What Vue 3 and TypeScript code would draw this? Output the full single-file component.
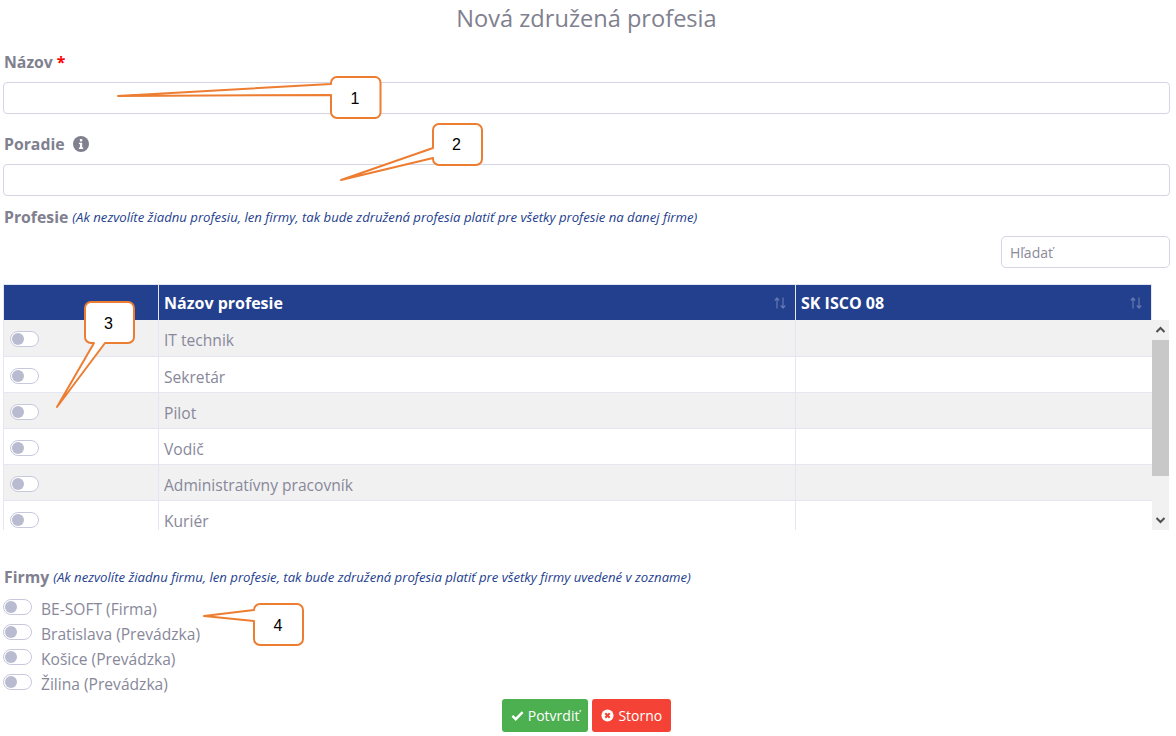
<template>
  <div class="page">
    <h1 class="title">Nová združená profesia</h1>

    <div class="field field--name">
      <label class="label">Názov <span class="req">*</span></label>
      <input class="input" type="text">
    </div>

    <div class="field field--order">
      <label class="label">
        Poradie
        <svg class="info" viewBox="0 0 16 16" aria-hidden="true">
          <circle cx="8" cy="8" r="8" fill="#80808f" />
          <rect x="6.9" y="3" width="2.4" height="2.4" rx="0.6" fill="#fff" />
          <path d="M5.9 6.7h3.3v4.9h1v1.3H5.9v-1.3h1V8H5.9z" fill="#fff" />
        </svg>
      </label>
      <input class="input" type="text">
    </div>

    <div class="section-head">
      <span class="label">Profesie</span>
      <em class="hint">(Ak nezvolíte žiadnu profesiu, len firmy, tak bude združená profesia platiť pre všetky profesie na danej firme)</em>
    </div>

    <div class="search-row">
      <input class="search" type="text" placeholder="Hľadať">
    </div>

    <div class="table">
      <div class="table__head">
        <div class="th th--toggle"></div>
        <div class="th th--name">
          <span>Názov profesie</span>
          <svg class="sort" viewBox="0 0 12 12" aria-hidden="true">
            <path d="M3 11.500V1M0.800 3.500L3 1l2.200 2.500M9 0.500V11M6.800 8.500L9 11l2.200-2.500" fill="none" stroke="currentColor" stroke-width="1.200" />
          </svg>
        </div>
        <div class="th th--code">
          <span>SK ISCO 08</span>
          <svg class="sort" viewBox="0 0 12 12" aria-hidden="true">
            <path d="M3 11.500V1M0.800 3.500L3 1l2.200 2.500M9 0.500V11M6.800 8.500L9 11l2.200-2.500" fill="none" stroke="currentColor" stroke-width="1.200" />
          </svg>
        </div>
      </div>
      <div class="table__wrap">
        <div class="table__body">
          <div v-for="(name, idx) in professions" :key="name" class="tr" :class="{ 'tr--odd': idx % 2 === 0 }">
            <div class="td td--toggle"><span class="switch"></span></div>
            <div class="td td--name">{{ name }}</div>
            <div class="td td--code"></div>
          </div>
        </div>
        <div class="scrollbar" aria-hidden="true">
          <svg class="scrollbar__arrow" viewBox="0 0 17 20">
            <path d="M4.500 12l4-4 4 4" fill="none" stroke="#505050" stroke-width="2" />
          </svg>
          <div class="scrollbar__track"><div class="scrollbar__thumb"></div></div>
          <svg class="scrollbar__arrow" viewBox="0 0 17 20">
            <path d="M4.500 8l4 4 4-4" fill="none" stroke="#505050" stroke-width="2" />
          </svg>
        </div>
      </div>
    </div>

    <div class="section-head section-head--firms">
      <span class="label">Firmy</span>
      <em class="hint">(Ak nezvolíte žiadnu firmu, len profesie, tak bude združená profesia platiť pre všetky firmy uvedené v zozname)</em>
    </div>

    <div class="firms">
      <div v-for="firm in firms" :key="firm" class="firm">
        <span class="switch"></span>
        <span class="firm__name">{{ firm }}</span>
      </div>
    </div>

    <div class="actions">
      <button type="button" class="btn btn--ok">
        <svg class="btn__icon" viewBox="0 0 14 14" aria-hidden="true">
          <path d="M1.500 7.500l3.600 3.500 7.400-7.600" fill="none" stroke="#fff" stroke-width="2.600" />
        </svg>
        Potvrdiť
      </button>
      <button type="button" class="btn btn--cancel">
        <svg class="btn__icon" viewBox="0 0 14 14" aria-hidden="true">
          <circle cx="7" cy="7" r="6.500" fill="#fff" />
          <path d="M4.600 4.600l4.800 4.800M9.400 4.600l-4.800 4.800" stroke="#f44336" stroke-width="2.200" />
        </svg>
        Storno
      </button>
    </div>

    <svg class="callouts" width="1176" height="736" aria-hidden="true">
      <g v-for="c in callouts" :key="c.text">
        <path :d="c.path" fill="#fff" stroke="#ed7d31" stroke-width="2" stroke-linejoin="round" />
        <text :x="c.tx" :y="c.ty" class="callouts__num" text-anchor="middle">{{ c.text }}</text>
      </g>
    </svg>
  </div>
</template>

<script setup lang="ts">
const professions = ['IT technik', 'Sekretár', 'Pilot', 'Vodič', 'Administratívny pracovník', 'Kuriér']
const firms = ['BE-SOFT (Firma)', 'Bratislava (Prevádzka)', 'Košice (Prevádzka)', 'Žilina (Prevádzka)']

// rounded box with a pointer tail leaving through one side
const callouts = [
  {
    text: '1', tx: 355, ty: 104,
    path: 'M337 77H375a5.500 5.500 0 0 1 5.500 5.500V112.500a5.500 5.500 0 0 1-5.500 5.500H337a6 6 0 0 1-6-6V95L118 96L331 84V83a6 6 0 0 1 6-6Z',
  },
  {
    text: '2', tx: 456.500, ty: 150,
    path: 'M439 124H476a6 6 0 0 1 6 6V159a6 6 0 0 1-6 6H439a6 6 0 0 1-6-6V158L341 180L433 148V130a6 6 0 0 1 6-6Z',
  },
  {
    text: '3', tx: 108.500, ty: 329,
    path: 'M91 302H128a6 6 0 0 1 6 6V337a6 6 0 0 1-6 6H105L57 407L94 343H91a6 6 0 0 1-6-6V308a6 6 0 0 1 6-6Z',
  },
  {
    text: '4', tx: 278, ty: 631,
    path: 'M260 604H297a6 6 0 0 1 6 6V639a6 6 0 0 1-6 6H260a6 6 0 0 1-6-6V621L204 616L254 610a6 6 0 0 1 6-6Z',
  },
]
</script>

<style>
html,
body {
  margin: 0;
  background: #fff;
}
</style>

<style scoped>
.page {
  position: relative;
  width: 1176px;
  height: 736px;
  padding: 0 6px 0 3px;
  box-sizing: border-box;
  overflow: hidden;
  font-family: "Open Sans", "Noto Sans", sans-serif;
  color: #80808f;
}

.title {
  margin: 0;
  padding-top: 3px;
  height: 41px;
  box-sizing: border-box;
  font-size: 23.6px;
  line-height: 30px;
  font-weight: 400;
  text-align: center;
  color: #80808f;
}

.field--name {
  padding-top: 11px;
}

.field--order {
  padding-top: 20px;
}

.label {
  display: flex;
  align-items: center;
  gap: 4px;
  height: 20px;
  padding-left: 1px;
  font-size: 15.8px;
  line-height: 20px;
  font-weight: 700;
  color: #80808f;
}

.req {
  color: #f00;
}

.info {
  width: 16px;
  height: 16px;
  margin-left: 4px;
}

.input {
  display: block;
  width: 100%;
  height: 32px;
  margin-top: 10px;
  box-sizing: border-box;
  border: 1px solid #d5d5e6;
  border-radius: 4px;
  background: #fff;
  outline: none;
}

.section-head {
  display: flex;
  align-items: center;
  gap: 4px;
  height: 20px;
  margin-top: 11px;
  white-space: nowrap;
}

.hint {
  font-family: "Open Sans", sans-serif;
  font-size: 13.15px;
  color: #23408e;
}

.search-row {
  display: flex;
  justify-content: flex-end;
  margin-top: 9px;
}

.search {
  width: 169px;
  height: 32px;
  box-sizing: border-box;
  padding: 0 8px;
  border: 1px solid #d5d5e6;
  border-radius: 5px;
  outline: none;
  font-family: inherit;
  font-size: 14px;
}

.search::placeholder {
  color: #8a8a9a;
}

.table {
  margin-top: 16px;
}

.table__head {
  display: flex;
  width: 1149px;
  height: 36px;
  box-sizing: border-box;
  background: #23408e;
  border: 1px solid #e6e6f2;
  border-bottom: 0;
  color: #fff;
}

.th {
  display: flex;
  align-items: center;
  justify-content: space-between;
  box-sizing: border-box;
  padding: 0 9px 0 5px;
  font-size: 16px;
  font-weight: 700;
}

.th--toggle,
.td--toggle {
  width: 154px;
  flex: none;
}

.th--name,
.td--name {
  width: 637px;
  flex: none;
  border-left: 1px solid #e6e6f2;
}

.th--code,
.td--code {
  flex: 1;
  border-left: 1px solid #e6e6f2;
}

.sort {
  width: 12px;
  height: 12px;
  color: #6478b0;
}

.table__wrap {
  display: flex;
  height: 210px;
  overflow: hidden;
}

.table__body {
  width: 1149px;
  flex: none;
}

.tr {
  display: flex;
  height: 36px;
  box-sizing: border-box;
  border-bottom: 1px solid #e6e6f2;
  border-left: 1px solid #e6e6f2;
  background: #fff;
}

.tr:first-child {
  height: 37px;
}

.tr--odd {
  background: #f1f1f1;
}

.td {
  display: flex;
  align-items: center;
  box-sizing: border-box;
  padding: 2px 5px 0;
  font-size: 15.6px;
  color: #88889a;
}

.td--name {
  padding-top: 4px;
}

.td--toggle {
  padding-left: 6px;
}

.switch {
  position: relative;
  display: inline-block;
  width: 29px;
  height: 16px;
  flex: none;
  box-sizing: border-box;
  border: 1px solid #c8c8dc;
  border-radius: 8px;
  background: #fff;
}

.switch::before {
  content: "";
  position: absolute;
  left: 1px;
  top: 1px;
  width: 12px;
  height: 12px;
  border-radius: 50%;
  background: #b9bbd1;
}

.scrollbar {
  display: flex;
  flex-direction: column;
  width: 17px;
  background: #f1f1f1;
}

.scrollbar__arrow {
  display: block;
  width: 17px;
  height: 20px;
  flex: none;
  background: #f1f1f1;
}

.scrollbar__track {
  flex: 1;
}

.scrollbar__thumb {
  height: 136px;
  background: #c8c8c8;
}

.section-head--firms {
  margin-top: 37px;
}

.firms {
  margin-top: 9px;
}

.firm {
  display: flex;
  align-items: center;
  gap: 9px;
  height: 25px;
  font-size: 15.6px;
  color: #88889a;
}

.firm .switch {
  margin-bottom: 4px;
}

.actions {
  display: flex;
  justify-content: center;
  gap: 4px;
  margin-top: 3px;
}

.btn {
  display: inline-flex;
  align-items: center;
  gap: 4px;
  height: 33px;
  padding: 0 9px;
  border: 0;
  border-radius: 3px;
  font-family: inherit;
  font-size: 14px;
  color: #fff;
}

.btn__icon {
  width: 13px;
  height: 13px;
}

.btn--ok {
  background: #4caf50;
}

.btn--cancel {
  background: #f44336;
}

.callouts {
  position: absolute;
  left: 0;
  top: 0;
  pointer-events: none;
}

.callouts__num {
  font-family: "Liberation Sans", sans-serif;
  font-size: 16px;
  fill: #000;
}
</style>
